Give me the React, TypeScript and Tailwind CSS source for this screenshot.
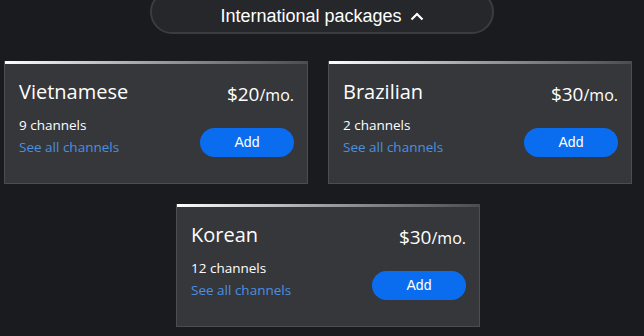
import React from "react";

type Pkg = { name: string; price: string; channels: string };

function Card({ p }: { p: Pkg }) {
  return (
    <div className="w-[304px] h-[123px] bg-[#35373b] border border-t-0 border-[#4b4d51] flex flex-col">
      <div className="h-[3px] bg-gradient-to-r from-white via-[#9c9da0] to-[#4b4d51]" />
      <div className="flex-1 flex flex-col pl-[14px] pr-[13px] pt-[15px]">
        <div className="flex items-start justify-between">
          <div className="text-[20px] leading-[26px] text-white" style={{ fontFamily: '"Open Sans", sans-serif' }}>
            {p.name}
          </div>
          <div className="text-white mt-[3px] leading-[24px]" style={{ fontFamily: '"Open Sans", sans-serif' }}>
            <span className="text-[19px]">{p.price}</span>
            <span className="text-[16px]">/mo.</span>
          </div>
        </div>
        <div className="flex items-end justify-between mt-[9px]">
          <div className="flex flex-col" style={{ fontFamily: '"Open Sans", sans-serif' }}>
            <span className="text-[13.5px] leading-[18px] text-white">{p.channels}</span>
            <span className="text-[13.5px] leading-[18px] text-[#4a90e2] mt-[4px]">See all channels</span>
          </div>
          <button
            className="w-[94px] h-[29px] rounded-full bg-[#0a6def] text-white text-[14px] -mb-[1px]"
            style={{ fontFamily: '"Liberation Sans", Arial, sans-serif' }}
          >
            Add
          </button>
        </div>
      </div>
    </div>
  );
}

export default function App() {
  const pkgs: Pkg[] = [
    { name: "Vietnamese", price: "$20", channels: "9 channels" },
    { name: "Brazilian", price: "$30", channels: "2 channels" },
    { name: "Korean", price: "$30", channels: "12 channels" },
  ];
  return (
    <div className="w-[644px] h-[336px] bg-[#1a1b1e] overflow-hidden flex flex-col">
      <div className="flex justify-center">
        <div
          className="w-[344px] h-[44px] -mt-[10px] rounded-full border-2 border-[#3a3c40] bg-[#25272b] flex items-center justify-center gap-[8px] pt-[9px] text-white text-[18px]"
          style={{ fontFamily: '"Liberation Sans", Arial, sans-serif' }}
        >
          <span>International packages</span>
          <svg width="14" height="9" viewBox="0 0 14 9" fill="none">
            <path d="M1.5 7.5 L7 2 L12.5 7.5" stroke="white" strokeWidth="2.2" />
          </svg>
        </div>
      </div>
      <div className="flex gap-[20px] pl-[4px] mt-[27px]">
        <Card p={pkgs[0]} />
        <Card p={pkgs[1]} />
      </div>
      <div className="flex pl-[176px] mt-[20px]">
        <Card p={pkgs[2]} />
      </div>
    </div>
  );
}
